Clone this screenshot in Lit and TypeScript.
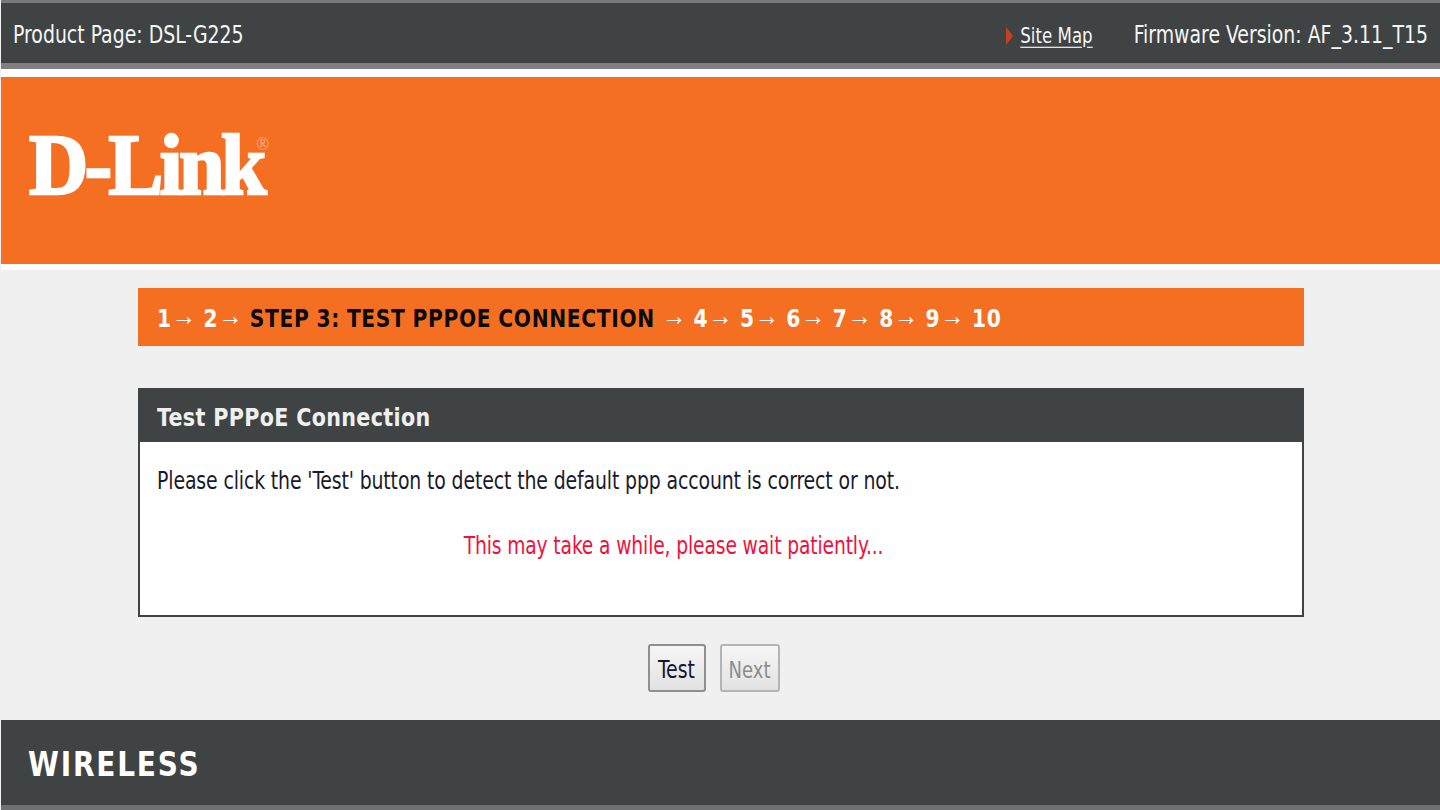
import { LitElement, html, css } from "lit";
import { customElement } from "lit/decorators.js";

@customElement("app-root")
export class AppRoot extends LitElement {
  static styles = css`
    :host {
      display: block;
      width: 1440px;
      height: 810px;
      overflow: hidden;
      background: #f0f0f0;
      font-family: "DejaVu Sans", sans-serif;
      font-stretch: condensed;
      color: #1a1a2a;
    }
    .page {
      display: flex;
      flex-direction: column;
      height: 810px;
      padding-left: 1px;
      box-sizing: border-box;
    }
    /* the reference is a stretched capture, so text is drawn narrow and tall */
    .tall {
      display: inline-block;
      transform: scaleY(1.18);
      white-space: pre;
    }
    .topbar {
      height: 56px;
      border-top: 3px solid #77797a;
      border-bottom: 6px solid #7f7f7f;
      background: #404344;
      color: #f4f6f6;
      display: flex;
      align-items: center;
      padding: 4px 12px 0;
      font-size: 21px;
    }
    .spacer {
      flex: 1;
    }
    .arrow {
      width: 0;
      height: 0;
      margin: 2px 7px 0 0;
      border-left: 7px solid #c8401a;
      border-top: 9px solid transparent;
      border-bottom: 9px solid transparent;
    }
    .sitemap {
      margin: 1px 41px 0 0;
      font-size: 18.5px;
      text-decoration: underline;
      text-underline-offset: 3px;
    }
    .banner {
      margin-top: 8px;
      height: 193px;
      box-sizing: border-box;
      background: #f56f23;
      border-bottom: 6px solid #fff;
      box-shadow: 0 -8px 0 #fff;
      display: flex;
      align-items: center;
      padding: 0 0 9px 28px;
    }
    .logo {
      color: #fff;
      font-family: "Liberation Serif", serif;
      font-stretch: normal;
      font-weight: 700;
      font-size: 82px;
      line-height: 1;
      letter-spacing: -3.5px;
      -webkit-text-stroke: 2.5px #fff;
      transform: scaleY(1.05);
      white-space: pre;
    }
    .reg {
      font-size: 17px;
      font-weight: 400;
      letter-spacing: 0;
      -webkit-text-stroke: 0;
      color: #f9b48a;
      vertical-align: 42px;
      margin-left: -7px;
      line-height: 0;
    }
    .content {
      flex: 1;
      display: flex;
      flex-direction: column;
      padding: 18px 136px 0 137px;
    }
    .steps {
      height: 58px;
      background: #f56f23;
      display: flex;
      align-items: center;
      padding: 1px 0 0 19px;
      box-sizing: border-box;
      font-size: 22.5px;
      font-weight: 700;
      color: #fff;
      letter-spacing: 0.65px;
      word-spacing: -0.7px;
    }
    .steps b {
      color: #0b0b0b;
    }
    .steps i {
      font-family: "Liberation Serif", serif;
      font-stretch: normal;
      font-style: normal;
      font-weight: 400;
      font-size: 24px;
      line-height: 0;
      vertical-align: 2px;
    }
    .steps .tall {
      transform: scaleY(1.14);
    }
    .panel {
      margin-top: 42px;
      height: 229px;
      background: #fff;
      border: 2px solid #404344;
      border-top: 0;
      box-sizing: border-box;
      display: flex;
      flex-direction: column;
    }
    .panel h2 {
      margin: 0 -2px;
      height: 54px;
      background: #404344;
      color: #eef0f0;
      font-size: 23px;
      font-weight: 700;
      letter-spacing: 0.33px;
      display: flex;
      align-items: center;
      padding: 3px 0 0 19px;
      box-sizing: border-box;
    }
    .panel h2 .tall {
      transform: scaleY(1.1);
    }
    .panel p {
      margin: 23px 0 0 17px;
      font-size: 21px;
      line-height: 32px;
      letter-spacing: -0.13px;
    }
    .panel .wait {
      margin: 33px 95px 0 0;
      font-size: 20.8px;
      text-align: center;
      color: #f0103c;
    }
    .buttons {
      display: flex;
      justify-content: center;
      gap: 14px;
      margin: 27px 15px 0 0;
    }
    .btn {
      height: 48px;
      box-sizing: border-box;
      border: 2px solid #8f8f8f;
      border-radius: 3px;
      background: linear-gradient(#f6f6f6, #e2e2e2);
      font-family: inherit;
      font-stretch: condensed;
      font-size: 21px;
      color: #15152a;
      padding: 3px 0 0;
      display: flex;
      align-items: center;
      justify-content: center;
    }
    .btn.test {
      width: 58px;
    }
    .btn.next {
      width: 60px;
      font-size: 20px;
      color: #8c8c8c;
      border-color: #b4b4b4;
    }
    .footer {
      height: 90px;
      border-bottom: 5px solid #6e7071;
      background: #404344;
      box-sizing: border-box;
      display: flex;
      align-items: center;
      padding: 3px 0 0 27px;
    }
    .wireless {
      color: #fff;
      font-stretch: normal;
      font-weight: 700;
      font-size: 28px;
      letter-spacing: 1.8px;
      transform: scaleY(1.2);
    }
  `;

  render() {
    return html`
      <div class="page">
        <div class="topbar">
          <span class="tall">Product Page: DSL-G225</span>
          <span class="spacer"></span>
          <span class="arrow"></span>
          <span class="sitemap tall">Site Map</span>
          <span class="tall">Firmware Version: AF_3.11_T15</span>
        </div>
        <div class="banner">
          <span class="logo">D-Link<span class="reg">®</span></span>
        </div>
        <div class="content">
          <div class="steps">
            <span class="tall">1<i>→</i> 2<i>→</i> <b>STEP 3: TEST PPPOE CONNECTION</b> <i>→</i> 4<i>→</i> 5<i>→</i> 6<i>→</i> 7<i>→</i> 8<i>→</i> 9<i>→</i> 10</span>
          </div>
          <div class="panel">
            <h2><span class="tall">Test PPPoE Connection</span></h2>
            <p><span class="tall">Please click the 'Test' button to detect the default ppp account is correct or not.</span></p>
            <p class="wait"><span class="tall">This may take a while, please wait patiently...</span></p>
          </div>
          <div class="buttons">
            <button class="btn test"><span class="tall">Test</span></button>
            <button class="btn next" disabled><span class="tall">Next</span></button>
          </div>
        </div>
        <div class="footer"><span class="wireless">WIRELESS</span></div>
      </div>
    `;
  }
}
